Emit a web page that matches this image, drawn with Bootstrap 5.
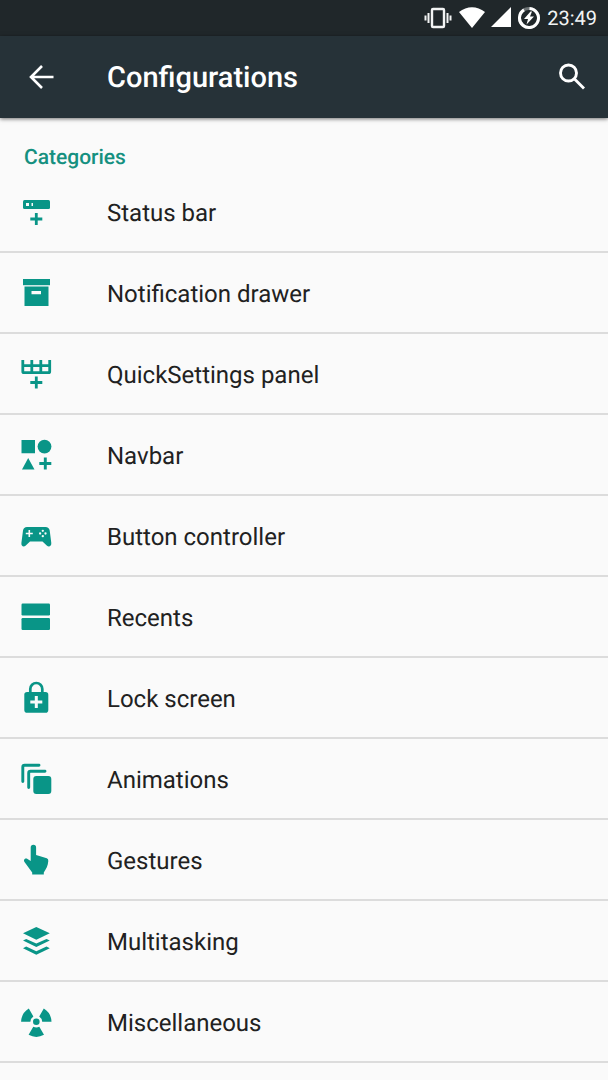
<!DOCTYPE html>
<html lang="en">
<head>
<meta charset="utf-8">
<meta name="viewport" content="width=device-width, initial-scale=1">
<title>Configurations</title>
<link href="https://cdn.jsdelivr.net/npm/bootstrap@5.3.0/dist/css/bootstrap.min.css" rel="stylesheet">
<style>
body { font-family: Roboto, "Noto Sans", sans-serif; background: #fafafa; color: #212121; overflow-x: hidden; text-rendering: geometricPrecision; }
svg { display: block; flex: none; }
.status-strip { background: #20272a; height: 36px; padding-right: 11px; font-size: 20px; line-height: 36px; color: #f2f4f4; gap: 6px; }
.signal-icons { gap: 7px; }
.app-bar { background: #263238; height: 82px; padding: 0 16px; box-shadow: 0 1px 4px rgba(0,0,0,.55); color: #fff; }
.app-bar h1 { font-size: 29px; line-height: 36px; font-weight: 500; padding: 2px 0 0 39px; }
.icon-btn { width: 52px; height: 52px; color: #fff; }
.app-bar .icon-btn:last-child { margin-right: -6px; }
.section-title { font-size: 21px; line-height: 24px; font-weight: 500; color: #159080; padding: 28px 24px 2px; }
.teal { color: #099587; }
.settings-row { --bs-list-group-bg: transparent; height: 81px; padding: 0 18px; font-size: 24px; line-height: 32px; color: #212121; gap: 53px; }
.list-group-flush > .settings-row, .list-group-flush > .settings-row:last-child { border: 0; border-bottom: 2px solid #dcdcdc; }
.settings-row span { padding-top: 3px; }
.settings-row:hover { color: #212121; background: #f2f2f2; }
</style>
</head>
<body>
<div class="status-strip d-flex align-items-center justify-content-end">
  <div class="signal-icons d-flex align-items-center">
  <svg width="28" height="24" viewBox="0 0 28 24" fill="none" stroke="#f2f4f4" aria-label="Vibrate"><rect x="8" y="3" width="12" height="18" rx="1" stroke-width="2.400"/><path d="M4.500 7v10M23.500 7v10M1.500 9.500v5M26.500 9.500v5" stroke-width="2"/></svg>
  <svg width="26" height="24" viewBox="0 0 26 24" fill="#fff" aria-label="Wi-Fi"><path d="M0 6C8-.5 18-.5 26 6L13 22z"/></svg>
  </div>
  <svg width="20" height="24" viewBox="0 0 20 24" fill="#fff" aria-label="Signal"><path d="M20 1v20H0z"/></svg>
  <svg width="24" height="24" viewBox="0 0 24 24" aria-label="Battery charging"><circle cx="12" cy="12" r="9.500" fill="none" stroke="#6d7375" stroke-width="3"/><path d="M12.500 2.500A9.500 9.500 0 1 1 7 3.900" fill="none" stroke="#fff" stroke-width="3"/><path d="M13.500 5.500 7 13h4l-1.500 5.500 7.500-8h-4l2-5z" fill="#fff"/></svg>
  <time>23:49</time>
</div>
<header class="app-bar d-flex align-items-center position-relative">
  <button type="button" class="btn icon-btn p-0 border-0 d-flex align-items-center justify-content-center" aria-label="Back"><svg width="26" height="26" viewBox="0 0 26 26" fill="none" stroke="currentColor" stroke-width="2.600"><path d="M24.500 13H3M13 2 2 13l11 11"/></svg></button>
  <h1 class="m-0 flex-grow-1">Configurations</h1>
  <button type="button" class="btn icon-btn p-0 border-0 d-flex align-items-center justify-content-center" aria-label="Search"><svg width="28" height="28" viewBox="0 0 28 28" fill="none" stroke="currentColor" stroke-width="2.900"><circle cx="10.500" cy="10" r="8"/><path d="m16 15.500 10 10"/></svg></button>
</header>
<main>
  <h2 class="section-title m-0">Categories</h2>
  <nav class="list-group list-group-flush" aria-label="Categories">
    <a href="#" class="list-group-item settings-row d-flex align-items-center"><svg class="teal" width="36" height="36" viewBox="0 0 36 36" fill="currentColor"><rect x="5" y="6" width="27" height="9" rx="1.500"/><path d="M8 9h3v3H8zM13.500 9H15v3h-1.500z" fill="#fafafa"/><path d="M18.300 19v12M12.300 25h12" stroke="currentColor" stroke-width="2.800"/></svg><span>Status bar</span></a>
    <a href="#" class="list-group-item settings-row d-flex align-items-center"><svg class="teal" width="36" height="36" viewBox="0 0 36 36" fill="currentColor"><path d="M5 4h27v6.200H5z"/><path fill-rule="evenodd" d="M6.500 11.500h24V31h-24zM13.500 16v3.300H23V16z"/></svg><span>Notification drawer</span></a>
    <a href="#" class="list-group-item settings-row d-flex align-items-center"><svg class="teal" width="36" height="36" viewBox="0 0 36 36" fill="none" stroke="currentColor" stroke-width="2.800"><path d="M4.800 4v11.500q0 1.200 1.200 1.200h24.500q1.200 0 1.200-1.200V4M4.800 9.700h27M13.800 4v12.500M22.800 4v12.500M18.300 20.500v12M12.300 26.500h12"/></svg><span>QuickSettings panel</span></a>
    <a href="#" class="list-group-item settings-row d-flex align-items-center"><svg class="teal" width="36" height="36" viewBox="0 0 36 36" fill="currentColor"><path d="M3.500 3H17v13.300H3.500zM10.200 21l6.300 11.500H4z"/><circle cx="26.500" cy="9.600" r="6.900"/><path d="M27.300 20.500v12M21.300 26.500h12" stroke="currentColor" stroke-width="2.900"/></svg><span>Navbar</span></a>
    <a href="#" class="list-group-item settings-row d-flex align-items-center"><svg class="teal" width="36" height="36" viewBox="0 0 36 36" fill="currentColor"><path d="M9 9h18.500q3.500 0 4.200 3.500L33.300 25c.3 3-2.300 4.500-4.300 2.800l-4.500-4.300H12l-4.500 4.300C5.500 29.500 3 28 3.400 25L5 12.500Q5.600 9 9 9z"/><path d="M11.300 12v7M7.800 15.500h7" stroke="#fafafa" stroke-width="1.600"/><g fill="#fafafa"><circle cx="24.800" cy="12.800" r="1.150"/><circle cx="24.800" cy="18.200" r="1.150"/><circle cx="22.100" cy="15.500" r="1.150"/><circle cx="27.500" cy="15.500" r="1.150"/></g></svg><span>Button controller</span></a>
    <a href="#" class="list-group-item settings-row d-flex align-items-center"><svg class="teal" width="36" height="36" viewBox="0 0 36 36" fill="currentColor"><rect x="3.500" y="4.500" width="28.500" height="12" rx="1.200"/><rect x="3.500" y="19" width="28.500" height="12" rx="1.200"/></svg><span>Recents</span></a>
    <a href="#" class="list-group-item settings-row d-flex align-items-center"><svg class="teal" width="36" height="36" viewBox="0 0 36 36" fill="currentColor"><rect x="6.300" y="12" width="24" height="20.700" rx="2.800"/><path d="M12.300 13V9a6 6 0 0 1 12 0v4" fill="none" stroke="currentColor" stroke-width="2.700"/><path d="M18.300 16v12M12.300 22h12" stroke="#fafafa" stroke-width="3"/></svg><span>Lock screen</span></a>
    <a href="#" class="list-group-item settings-row d-flex align-items-center"><svg class="teal" width="36" height="36" viewBox="0 0 36 36" fill="currentColor"><rect x="15.300" y="15" width="18" height="18" rx="3"/><path d="M4.800 20.500V6q0-1.800 1.800-1.800H21M10.700 26.500V12q0-1.800 1.800-1.800H27" fill="none" stroke="currentColor" stroke-width="2.900" stroke-linecap="round"/></svg><span>Animations</span></a>
    <a href="#" class="list-group-item settings-row d-flex align-items-center"><svg class="teal" width="36" height="36" viewBox="0 0 36 36" fill="currentColor"><path d="M12.700 5.500a2.700 2.700 0 0 1 5.400 0V13l10.700 3.300q1.700.6 1.500 2.700c-.3 4.500-2.100 8-4.500 11.500V32.500H14.200v-2L6.500 20c-1.500-2.200.8-4.500 3-3l3.200 2z"/></svg><span>Gestures</span></a>
    <a href="#" class="list-group-item settings-row d-flex align-items-center"><svg class="teal" width="36" height="36" viewBox="0 0 36 36" fill="currentColor"><path d="m18.300 4 13.500 6.300-13.500 6.500L5 10.300zM5 17.500l3.200-1.600 10.100 4.700 10.200-4.700 3.300 1.600-13.500 6.600zM5 25.200l3.200-1.600 10.100 4.700 10.200-4.700 3.300 1.600-13.500 6.600z"/></svg><span>Multitasking</span></a>
    <a href="#" class="list-group-item settings-row d-flex align-items-center"><svg class="teal" width="36" height="36" viewBox="0 0 36 36" fill="currentColor"><circle cx="18.300" cy="17.700" r="3.300"/><path id="blade" d="M15.300 22.800q3 1.500 6 0l4.700 8q-7.700 4.200-15.400 0z"/><use href="#blade" transform="rotate(120 18.300 17.700)"/><use href="#blade" transform="rotate(240 18.300 17.700)"/></svg><span>Miscellaneous</span></a>
  </nav>
</main>
<script src="https://cdn.jsdelivr.net/npm/bootstrap@5.3.0/dist/js/bootstrap.bundle.min.js"></script>
</body>
</html>
